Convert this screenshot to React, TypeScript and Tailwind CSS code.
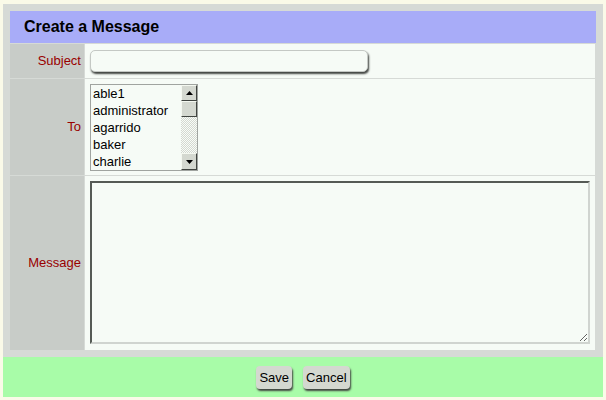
import React from 'react';

const users = ['able1', 'administrator', 'agarrido', 'baker', 'charlie'];

function Arrow({ up }: { up?: boolean }) {
  return (
    <svg width="7" height="4" viewBox="0 0 7 4">
      <polygon points={up ? '3.5,0 7,4 0,4' : '0,0 7,0 3.5,4'} fill="#000" />
    </svg>
  );
}

function ScrollButton({ children, className = '' }: { children?: React.ReactNode; className?: string }) {
  return (
    <div
      className={`w-[16px] bg-[#d4d8d0] border border-t-[#f4f8f0] border-l-[#f4f8f0] border-r-[#404440] border-b-[#404440] flex items-center justify-center ${className}`}
    >
      {children}
    </div>
  );
}

export default function App() {
  return (
    <div className="w-[606px] h-[400px] bg-[#fafae8] pt-[4px] px-[3px] font-['Liberation_Sans',Arial,sans-serif] text-[13px] text-black">
      <div className="bg-[#d6dad6] p-[7px]">
        <div className="h-[32px] bg-[#a8acf8] pl-[14px] flex items-center text-[16px] font-bold">
          Create a Message
        </div>
        <div className="grid grid-cols-[74px_1fr] gap-px mt-px pr-px">
          <div className="bg-[#c8ccc8] h-[34px] flex items-center justify-end pr-[3px] text-[#990000]">Subject</div>
          <div className="bg-[#f6fbf6] flex items-center pl-[5px]">
            <div className="w-[278px] h-[22px] rounded-[5px] border border-[#c4c8c4] bg-[#f6fbf6] shadow-[1px_2px_2px_#404440]" />
          </div>

          <div className="bg-[#c8ccc8] h-[96px] flex items-center justify-end pr-[3px] text-[#990000]">To</div>
          <div className="bg-[#f6fbf6] pl-[5px] pt-[5px]">
            <div className="w-[108px] h-[87px] border border-[#a0a4a0] flex bg-[#f6fbf6]">
              <div className="flex-1 pl-[2px]">
                {users.map(u => (
                  <div key={u} className="h-[17px] leading-[17px]">{u}</div>
                ))}
              </div>
              <div className="w-[16px] flex flex-col">
                <ScrollButton className="h-[16px]"><Arrow up /></ScrollButton>
                <ScrollButton className="h-[16px]" />
                <div className="flex-1 bg-[repeating-conic-gradient(#d4d8d0_0_25%,#f8fcf8_0_50%)] bg-[length:2px_2px]" />
                <ScrollButton className="h-[17px]"><Arrow /></ScrollButton>
              </div>
            </div>
          </div>

          <div className="bg-[#c8ccc8] h-[174px] flex items-center justify-end pr-[3px] text-[#990000]">Message</div>
          <div className="bg-[#f6fbf6] pl-[5px] pt-[5px]">
            <textarea className="block w-[500px] h-[163px] bg-[#f6fbf6] border-2 border-t-[#555a55] border-l-[#555a55] border-r-[#d0d4d0] border-b-[#d0d4d0] outline-none" />
          </div>
        </div>
      </div>
      <div className="h-[40px] bg-[#a8fca8] flex items-center justify-center gap-[11px] pt-px">
        <button className="h-[23px] px-[3px] rounded-[4px] bg-[#d4d8d0] shadow-[1px_2px_2px_#404440] text-[13px]">Save</button>
        <button className="h-[23px] px-[3px] rounded-[4px] bg-[#d4d8d0] shadow-[1px_2px_2px_#404440] text-[13px]">Cancel</button>
      </div>
    </div>
  );
}
